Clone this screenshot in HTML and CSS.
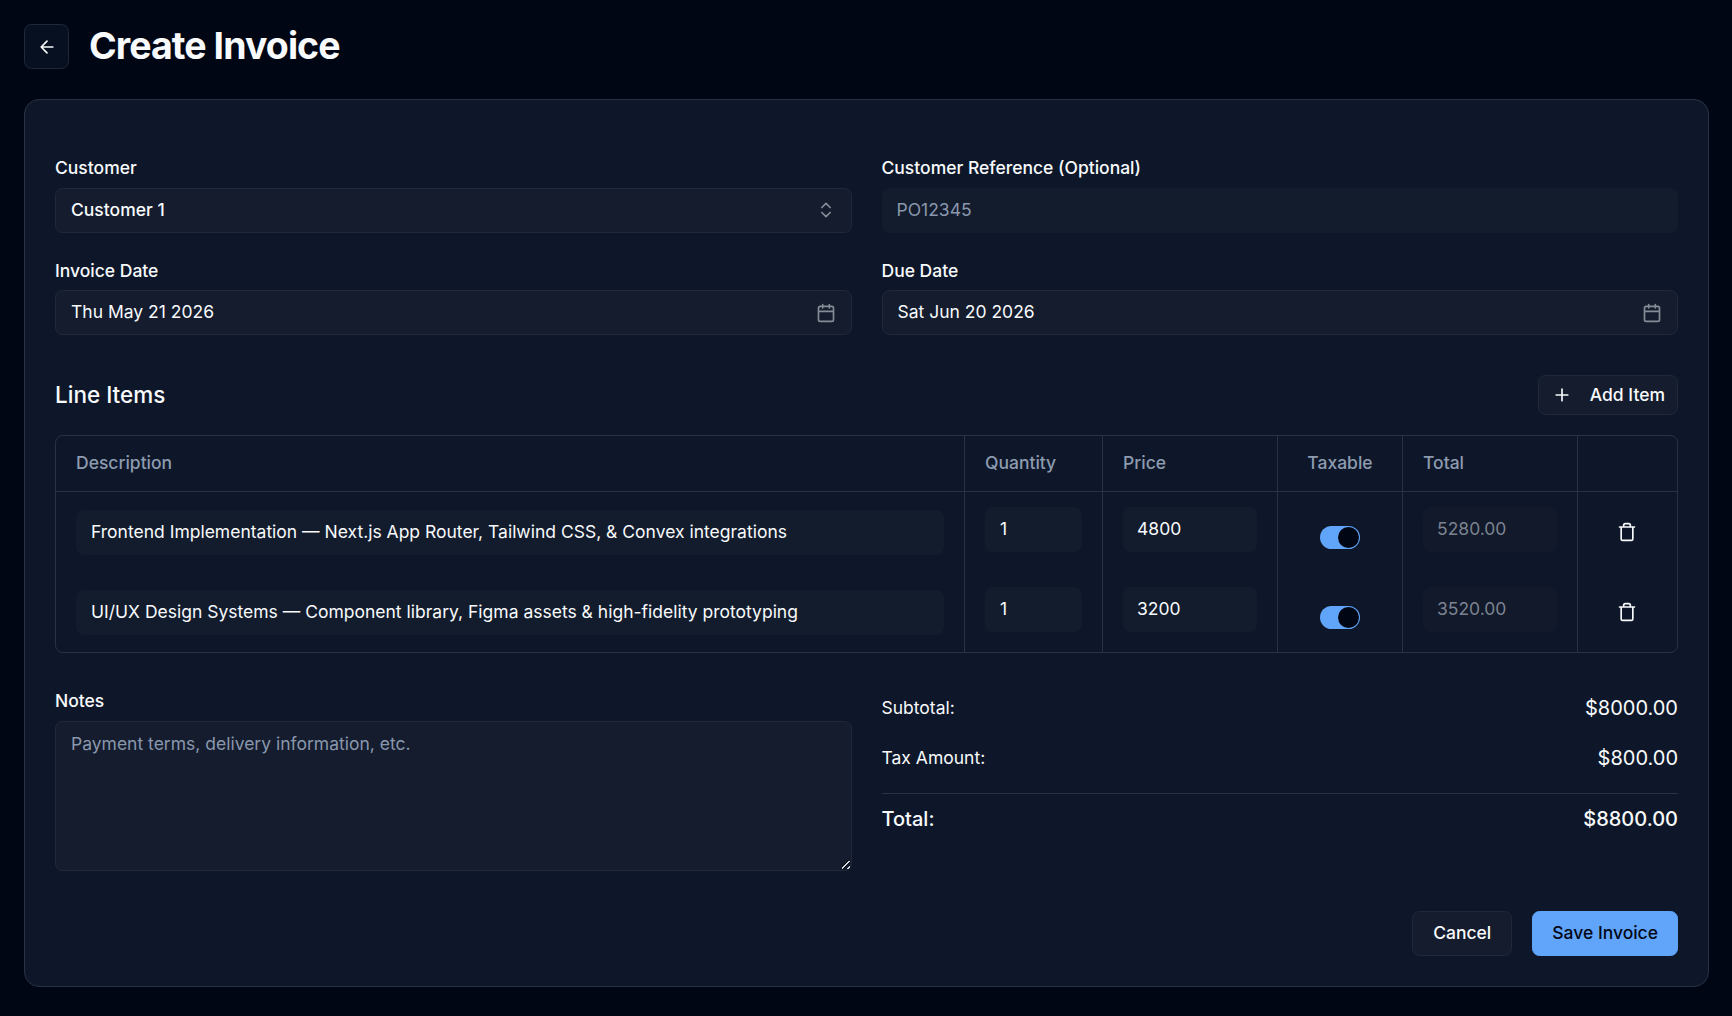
FILE: index.html
```html
<!DOCTYPE html>
<html lang="en">
<head>
    <meta charset="UTF-8">
    <meta name="viewport" content="width=device-width, initial-scale=1.0">
    <title>Create Invoice</title>
    <link rel="stylesheet" href="styles.css">
</head>
<body>

<header class="page-header">
    <button class="btn back-button" type="button" aria-label="Back">
        <svg class="icon" viewBox="0 0 24 24"><path d="m12 19-7-7 7-7M19 12H5"/></svg>
    </button>
    <h1>Create Invoice</h1>
</header>

<form class="card">
    <div class="form-grid">
        <div class="field">
            <label>Customer</label>
            <button class="btn picker picker-bold" type="button">
                <span>Customer 1</span>
                <svg class="icon" viewBox="0 0 24 24"><path d="m7 15 5 5 5-5M7 9l5-5 5 5"/></svg>
            </button>
        </div>
        <div class="field">
            <label for="reference">Customer Reference (Optional)</label>
            <input class="input" type="text" id="reference" placeholder="PO12345">
        </div>
        <div class="field field-date">
            <label>Invoice Date</label>
            <button class="btn picker" type="button">
                <span>Thu May 21 2026</span>
                <svg class="icon" viewBox="0 0 24 24"><path d="M8 2v4M16 2v4M5 4h14a2 2 0 0 1 2 2v14a2 2 0 0 1-2 2H5a2 2 0 0 1-2-2V6a2 2 0 0 1 2-2zM3 10h18"/></svg>
            </button>
        </div>
        <div class="field field-date">
            <label>Due Date</label>
            <button class="btn picker" type="button">
                <span>Sat Jun 20 2026</span>
                <svg class="icon" viewBox="0 0 24 24"><path d="M8 2v4M16 2v4M5 4h14a2 2 0 0 1 2 2v14a2 2 0 0 1-2 2H5a2 2 0 0 1-2-2V6a2 2 0 0 1 2-2zM3 10h18"/></svg>
            </button>
        </div>
    </div>

    <div class="items-header">
        <h2>Line Items</h2>
        <button class="btn add-button" type="button">
            <svg class="icon" viewBox="0 0 24 24"><path d="M5 12h14M12 5v14"/></svg>
            <span>Add Item</span>
        </button>
    </div>

    <div class="items-table">
        <div class="row row-head">
            <div class="cell">Description</div>
            <div class="cell">Quantity</div>
            <div class="cell">Price</div>
            <div class="cell cell-center">Taxable</div>
            <div class="cell">Total</div>
            <div class="cell"></div>
        </div>
        <div class="row">
            <div class="cell cell-description"><input class="input" type="text" value="Frontend Implementation — Next.js App Router, Tailwind CSS, &amp; Convex integrations"></div>
            <div class="cell"><input class="input" type="text" value="1"></div>
            <div class="cell"><input class="input input-amount" type="text" value="4800"></div>
            <div class="cell cell-switch"><button class="switch" type="button" role="switch" aria-checked="true"></button></div>
            <div class="cell"><input class="input input-amount" type="text" value="5280.00" disabled></div>
            <div class="cell cell-delete">
                <button class="delete-button" type="button" aria-label="Delete">
                    <svg class="icon" viewBox="0 0 24 24"><path d="M3 6h18M19 6v14c0 1-1 2-2 2H7c-1 0-2-1-2-2V6M8 6V4c0-1 1-2 2-2h4c1 0 2 1 2 2v2"/></svg>
                </button>
            </div>
        </div>
        <div class="row">
            <div class="cell cell-description"><input class="input" type="text" value="UI/UX Design Systems — Component library, Figma assets &amp; high-fidelity prototyping"></div>
            <div class="cell"><input class="input" type="text" value="1"></div>
            <div class="cell"><input class="input input-amount" type="text" value="3200"></div>
            <div class="cell cell-switch"><button class="switch" type="button" role="switch" aria-checked="true"></button></div>
            <div class="cell"><input class="input input-amount" type="text" value="3520.00" disabled></div>
            <div class="cell cell-delete">
                <button class="delete-button" type="button" aria-label="Delete">
                    <svg class="icon" viewBox="0 0 24 24"><path d="M3 6h18M19 6v14c0 1-1 2-2 2H7c-1 0-2-1-2-2V6M8 6V4c0-1 1-2 2-2h4c1 0 2 1 2 2v2"/></svg>
                </button>
            </div>
        </div>
    </div>

    <div class="summary-grid">
        <div class="field">
            <label for="notes">Notes</label>
            <textarea id="notes" placeholder="Payment terms, delivery information, etc."></textarea>
        </div>
        <div class="totals">
            <div class="total-row"><span>Subtotal:</span><span class="amount">$8000.00</span></div>
            <div class="total-row"><span>Tax Amount:</span><span class="amount">$800.00</span></div>
            <div class="total-row grand-total"><span>Total:</span><span class="amount">$8800.00</span></div>
        </div>
    </div>

    <div class="form-actions">
        <button class="btn cancel-button" type="button">Cancel</button>
        <button class="btn save-button" type="submit">Save Invoice</button>
    </div>
</form>

</body>
</html>
```
FILE: styles.css
```css
* {
    box-sizing: border-box;
}

body {
    font-family: Inter, sans-serif;
    font-size: 17.5px;
    line-height: 25px;
    margin: 0;
    padding: 24px 23px 29px 24px;
    background-color: #000613;
    color: #f8fafc;
}

h1, h2 {
    margin: 0;
}

button, input, textarea {
    font: inherit;
    color: inherit;
    margin: 0;
}

.page-header {
    display: flex;
    align-items: center;
    gap: 20px;
    height: 45px;
    margin-bottom: 30px;
}

h1 {
    font-size: 37.5px;
    line-height: 43px;
    padding-bottom: 2px;
    font-weight: 700;
    letter-spacing: -0.025em;
}

.btn {
    display: flex;
    align-items: center;
    height: 45px;
    border: 1px solid #1f2939;
    border-radius: 7.5px;
    background-color: #141c2e;
    font-weight: 500;
    cursor: pointer;
}

.icon {
    width: 20px;
    height: 20px;
    flex-shrink: 0;
    fill: none;
    stroke: currentColor;
    stroke-width: 2;
    stroke-linecap: round;
    stroke-linejoin: round;
}

.back-button {
    width: 45px;
    justify-content: center;
    padding: 0;
    background-color: #071020;
}

.card {
    height: 888px;
    padding: 55px 30px 30px;
    border: 1px solid #273343;
    border-radius: 15px;
    background-color: #0e1729;
}

.form-grid, .summary-grid {
    display: grid;
    grid-template-columns: 1fr 1fr;
    gap: 25px 30px;
}

.field {
    display: flex;
    flex-direction: column;
}

.field label {
    font-weight: 500;
    line-height: 25px;
    margin-bottom: 8px;
}

.field-date label {
    margin-bottom: 7px;
}

.picker {
    width: 100%;
    justify-content: space-between;
    padding: 0 15px;
    font-weight: 400;
}

.picker span, .add-button span {
    padding-bottom: 2px;
}

.picker-bold {
    font-weight: 500;
}

.picker .icon {
    color: #868c96;
}

.picker-bold .icon {
    margin-bottom: 1px;
}

.input {
    display: block;
    width: 100%;
    height: 45px;
    padding: 0 15px 2px;
    border: none;
    border-radius: 7.5px;
    background-color: #131c2d;
    outline: none;
}

.input-amount {
    padding-left: 14px;
}

.input::placeholder, textarea::placeholder {
    color: #8997ac;
    opacity: 1;
}

.input:disabled {
    background-color: #11192b;
    color: #7c838f;
}

.items-header {
    display: flex;
    justify-content: space-between;
    align-items: center;
    height: 40px;
    margin: 40px 0 20px;
}

h2 {
    padding-bottom: 2px;
    font-size: 22.5px;
    font-weight: 500;
}

.add-button {
    height: 40px;
    padding: 0 12px 0 13px;
    gap: 18px;
}

.items-table {
    border: 1px solid #273343;
    border-radius: 7.5px;
}

.row {
    display: grid;
    grid-template-columns: 1fr 138px 175px 125px 175px 99px;
    height: 80px;
}

.row-head {
    height: 56px;
    border-bottom: 1px solid #273343;
    color: #8d9bb0;
    font-weight: 500;
}

.cell {
    padding: 15px 20px;
    border-right: 1px solid #273343;
}

.row-head .cell {
    padding-top: 14px;
}

.cell:last-child {
    border-right: none;
}

.cell-center {
    text-align: center;
}

.cell-description {
    padding-top: 18px;
}

.cell-switch {
    display: flex;
    justify-content: center;
    padding-top: 34px;
}

.switch {
    width: 40px;
    height: 23px;
    padding: 0 1px;
    display: flex;
    align-items: center;
    justify-content: flex-end;
    border: none;
    border-radius: 12px;
    background-color: #60a5fa;
}

.switch::after {
    content: "";
    width: 21px;
    height: 21px;
    border-radius: 50%;
    background-color: #000613;
}

.cell-delete {
    display: flex;
    justify-content: center;
    align-items: center;
    padding-right: 21px;
}

.delete-button {
    display: flex;
    padding: 0;
    border: none;
    background: none;
    cursor: pointer;
}

.summary-grid {
    margin-top: 35px;
}

textarea {
    display: block;
    width: 100%;
    height: 150px;
    padding: 9px 15px;
    border: 1px solid #1f2939;
    border-radius: 7.5px;
    background-color: #141c2e;
    outline: none;
    resize: vertical;
}

textarea::-webkit-resizer {
    background: linear-gradient(135deg, transparent 36%, #050c18 36% 43%, #d5d8dc 43% 54%, #050c18 54% 61%, transparent 61% 78%, #d5d8dc 78% 88%, transparent 88%) no-repeat 6px 6px / 8px 8px;
}

.totals {
    margin-top: -5px;
}

.total-row {
    display: flex;
    justify-content: space-between;
    align-items: center;
    height: 50px;
}

.total-row span:first-child {
    padding-bottom: 1px;
}

.amount {
    font-size: 20px;
}

.grand-total {
    height: 52px;
    margin-top: 10px;
    border-top: 1px solid #273343;
    font-size: 20px;
    font-weight: 500;
}

.form-actions {
    display: flex;
    justify-content: flex-end;
    gap: 20px;
    margin-top: 40px;
}

.cancel-button {
    padding: 0 20px 2px;
}

.save-button {
    padding: 0 19px 2px;
    border-color: #60a5fa;
    background-color: #60a5fa;
    color: #020817;
}
```
